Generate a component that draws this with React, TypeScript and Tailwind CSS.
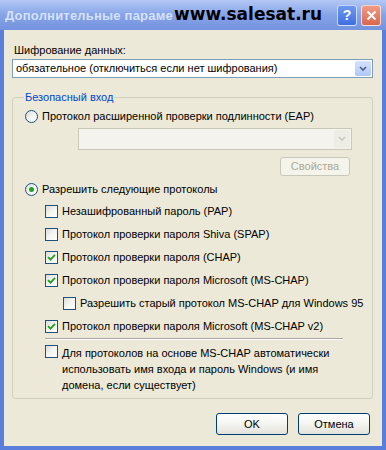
import type { ReactNode } from 'react';

function CheckBox({ checked }: { checked?: boolean }) {
  return (
    <span className="relative flex h-[13px] w-[13px] shrink-0 items-center justify-center border border-[#1c5180] bg-gradient-to-br from-[#dcdcd7] via-[#f4f4f1] to-white">
      {checked && (
        <svg width="9" height="9" viewBox="0 0 9 9">
          <path d="M1 4.2 L3.5 6.7 L8 1.8" fill="none" stroke="#21a121" strokeWidth="1.8" />
        </svg>
      )}
    </span>
  );
}

function Radio({ checked }: { checked?: boolean }) {
  return (
    <span className="flex h-[13px] w-[13px] shrink-0 items-center justify-center rounded-full border border-[#1c5180] bg-gradient-to-br from-[#dcdcd7] via-[#f4f4f1] to-white">
      {checked && <span className="h-[5px] w-[5px] rounded-full bg-[#21a121]" />}
    </span>
  );
}

function CheckRow({ checked, children, className }: { checked?: boolean; children: ReactNode; className?: string }) {
  return (
    <div className={`flex h-[13px] items-center gap-[4px] whitespace-nowrap ${className ?? ''}`}>
      <CheckBox checked={checked} />
      <span>{children}</span>
    </div>
  );
}

function XpButton({ children }: { children: ReactNode }) {
  return (
    <button
      type="button"
      className="flex h-[22px] w-[72px] items-center justify-center rounded-[3px] border border-[#003c74] bg-gradient-to-b from-white via-[#f4f4f0] to-[#e3e2da] text-black"
    >
      {children}
    </button>
  );
}

export default function App() {
  return (
    <div className="flex h-[450px] w-[386px] flex-col overflow-hidden bg-[#5a7edc] font-['Liberation_Sans',Arial,sans-serif] text-[11px] leading-[13px] text-black">
      <div className="relative flex h-[30px] items-center bg-gradient-to-b from-[#b4c8f4] via-[#86a3e8] to-[#7593de] pl-[5px] pr-[5px]">
        <span className="w-[168px] overflow-hidden whitespace-nowrap text-[13px] font-bold tracking-[0.2px] text-[#d6e2fa]">
          Дополнительные параметры
        </span>
        <span className="absolute left-[174px] top-[4px] font-['DejaVu_Sans',sans-serif] text-[17px] leading-[20px] font-bold text-black">
          www.salesat.ru
        </span>
        <div className="ml-auto flex gap-[4px]">
          <span className="flex h-[21px] w-[20px] items-center justify-center rounded-[3px] border border-white/70 bg-gradient-to-b from-[#6e98f0] to-[#3e6fe0] text-[14px] font-bold text-white">
            ?
          </span>
          <span className="flex h-[21px] w-[20px] items-center justify-center rounded-[3px] border border-white/70 bg-gradient-to-b from-[#f19a86] to-[#d9664d]">
            <svg width="11" height="11" viewBox="0 0 11 11">
              <path d="M1.5 1.5 L9.5 9.5 M9.5 1.5 L1.5 9.5" stroke="white" strokeWidth="2" />
            </svg>
          </span>
        </div>
      </div>

      <div className="mx-[4px] mb-[4px] flex flex-1 flex-col bg-[#ece9d8] pl-[8px] pr-[9px] pt-[14px]">
        <div className="h-[13px] pl-[2px]">Шифрование данных:</div>
        <div className="mt-[2px] flex h-[19px] items-center border border-[#7f9db9] bg-white pl-[3px]">
          <span className="flex-1">обязательное (отключиться если нет шифрования)</span>
          <span className="mr-[1px] flex h-[15px] w-[16px] items-center justify-center rounded-[2px] bg-gradient-to-b from-[#d6e3fd] to-[#b0c6f6]">
            <svg width="8" height="6" viewBox="0 0 8 6">
              <path d="M1 1 L4 4 L7 1" fill="none" stroke="#4d6185" strokeWidth="1.6" />
            </svg>
          </span>
        </div>

        <fieldset className="mt-[13px] flex h-[308px] flex-col rounded-[3px] border border-[#d0d0bf] pl-[12px] pr-[4px]">
          <legend className="-ml-[1px] px-[1px] text-[#0046d5]">Безопасный вход</legend>

          <div className="mt-[6px] flex h-[13px] items-center gap-[4px]">
            <Radio />
            <span>Протокол расширенной проверки подлинности (EAP)</span>
          </div>

          <div className="ml-[53px] mt-[5px] flex h-[22px] w-[274px] items-center justify-end border border-[#c9c7ba] bg-[#f4f3ee]">
            <span className="mr-[1px] flex h-[18px] w-[16px] items-center justify-center rounded-[2px] bg-[#eeede5]">
              <svg width="8" height="6" viewBox="0 0 8 6">
                <path d="M1 1 L4 4 L7 1" fill="none" stroke="#c9c7ba" strokeWidth="1.6" />
              </svg>
            </span>
          </div>

          <div className="ml-[255px] mt-[7px] flex h-[19px] w-[70px] items-center justify-center rounded-[3px] border border-[#c9c7ba] bg-[#f5f4ea] text-[#aca899]">
            Свойства
          </div>

          <div className="mt-[7px] flex h-[13px] items-center gap-[4px]">
            <Radio checked />
            <span>Разрешить следующие протоколы</span>
          </div>

          <div className="ml-[20px] mt-[9px] flex flex-col gap-[10px]">
            <CheckRow>Незашифрованный пароль (PAP)</CheckRow>
            <CheckRow>Протокол проверки пароля Shiva (SPAP)</CheckRow>
            <CheckRow checked>Протокол проверки пароля (CHAP)</CheckRow>
            <CheckRow checked>Протокол проверки пароля Microsoft (MS-CHAP)</CheckRow>
            <CheckRow className="ml-[18px]">Разрешить старый протокол MS-CHAP для Windows 95</CheckRow>
            <CheckRow checked>Протокол проверки пароля Microsoft (MS-CHAP v2)</CheckRow>
          </div>

          <div className="ml-[20px] mt-[5px] w-[298px] border-t border-[#aca899] border-b border-b-white" />

          <div className="ml-[20px] mt-[5px] flex items-start gap-[4px]">
            <CheckBox />
            <span className="leading-[16px]">
              Для протоколов на основе MS-CHAP автоматически
              <br />
              использовать имя входа и пароль Windows (и имя
              <br />
              домена, если существует)
            </span>
          </div>
        </fieldset>

        <div className="mt-[14px] flex justify-end gap-[10px] pr-[3px]">
          <XpButton>OK</XpButton>
          <XpButton>Отмена</XpButton>
        </div>
      </div>
    </div>
  );
}
